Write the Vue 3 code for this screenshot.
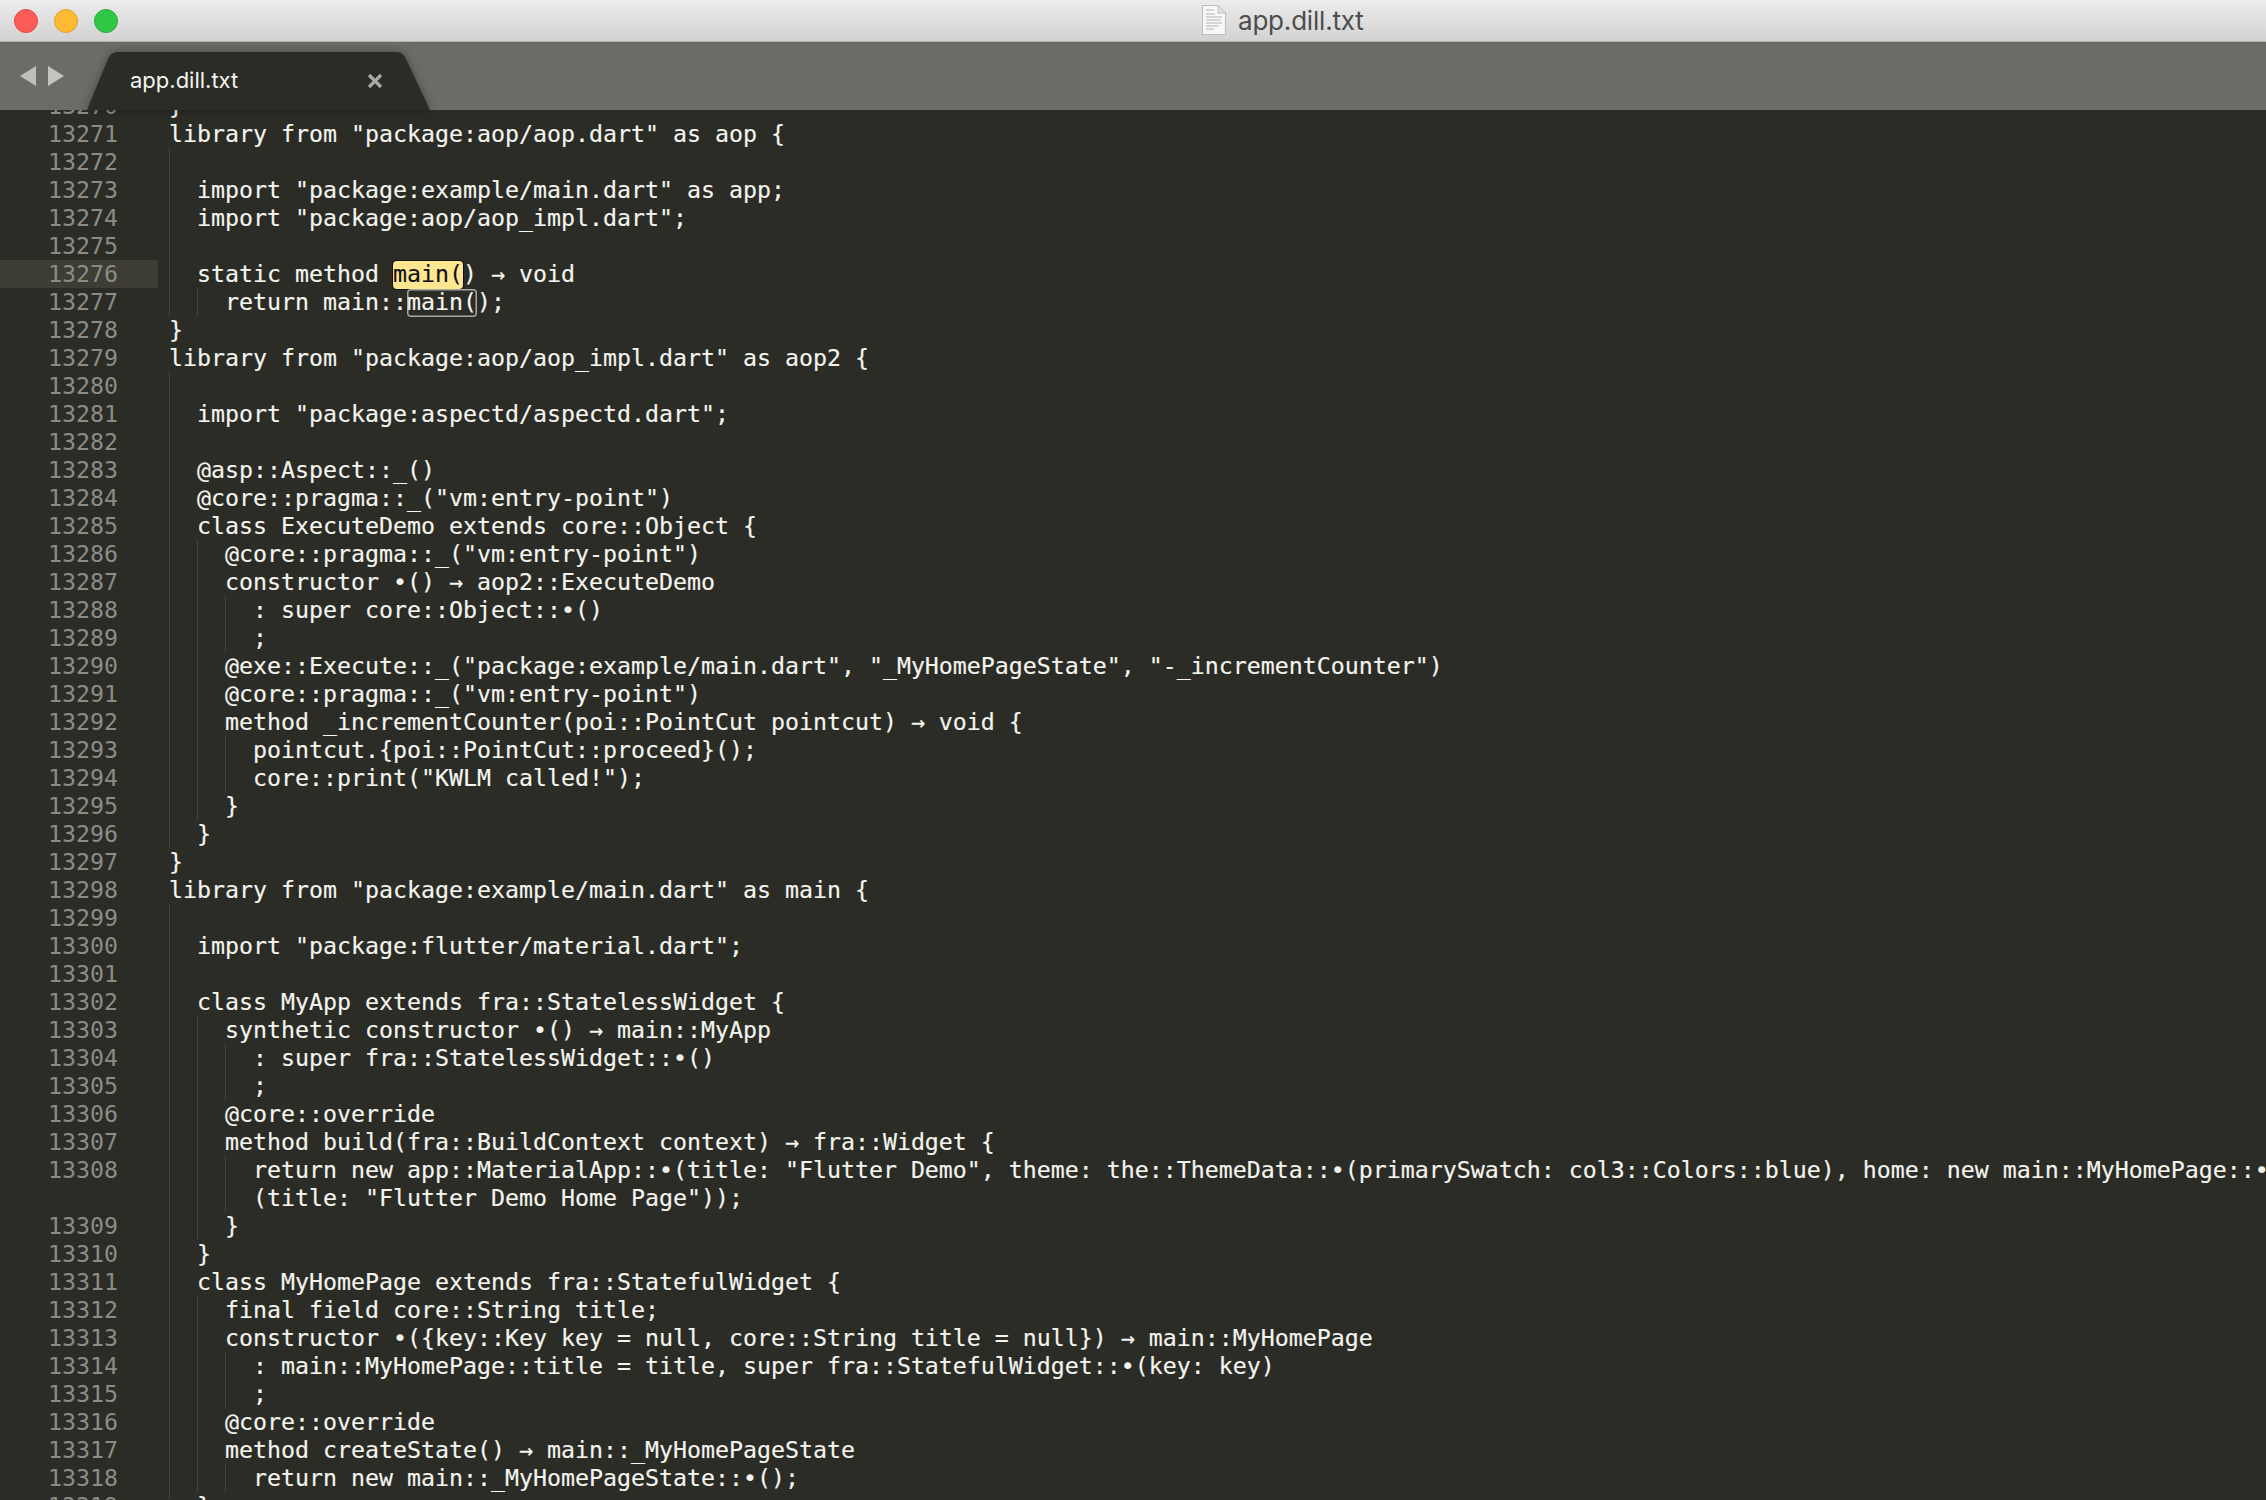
<script setup>
import { computed } from 'vue'

const source = [
  [13270, '}'],
  [13271, 'library from "package:aop/aop.dart" as aop {'],
  [13272, ''],
  [13273, '  import "package:example/main.dart" as app;'],
  [13274, '  import "package:aop/aop_impl.dart";'],
  [13275, ''],
  [13276, '  static method main() → void', 'find', 16],
  [13277, '    return main::main();', 'outline', 17],
  [13278, '}'],
  [13279, 'library from "package:aop/aop_impl.dart" as aop2 {'],
  [13280, ''],
  [13281, '  import "package:aspectd/aspectd.dart";'],
  [13282, ''],
  [13283, '  @asp::Aspect::_()'],
  [13284, '  @core::pragma::_("vm:entry-point")'],
  [13285, '  class ExecuteDemo extends core::Object {'],
  [13286, '    @core::pragma::_("vm:entry-point")'],
  [13287, '    constructor •() → aop2::ExecuteDemo'],
  [13288, '      : super core::Object::•()'],
  [13289, '      ;'],
  [13290, '    @exe::Execute::_("package:example/main.dart", "_MyHomePageState", "-_incrementCounter")'],
  [13291, '    @core::pragma::_("vm:entry-point")'],
  [13292, '    method _incrementCounter(poi::PointCut pointcut) → void {'],
  [13293, '      pointcut.{poi::PointCut::proceed}();'],
  [13294, '      core::print("KWLM called!");'],
  [13295, '    }'],
  [13296, '  }'],
  [13297, '}'],
  [13298, 'library from "package:example/main.dart" as main {'],
  [13299, ''],
  [13300, '  import "package:flutter/material.dart";'],
  [13301, ''],
  [13302, '  class MyApp extends fra::StatelessWidget {'],
  [13303, '    synthetic constructor •() → main::MyApp'],
  [13304, '      : super fra::StatelessWidget::•()'],
  [13305, '      ;'],
  [13306, '    @core::override'],
  [13307, '    method build(fra::BuildContext context) → fra::Widget {'],
  [13308, '      return new app::MaterialApp::•(title: "Flutter Demo", theme: the::ThemeData::•(primarySwatch: col3::Colors::blue), home: new main::MyHomePage::•'],
  ['', '      (title: "Flutter Demo Home Page"));'],
  [13309, '    }'],
  [13310, '  }'],
  [13311, '  class MyHomePage extends fra::StatefulWidget {'],
  [13312, '    final field core::String title;'],
  [13313, '    constructor •({key::Key key = null, core::String title = null}) → main::MyHomePage'],
  [13314, '      : main::MyHomePage::title = title, super fra::StatefulWidget::•(key: key)'],
  [13315, '      ;'],
  [13316, '    @core::override'],
  [13317, '    method createState() → main::_MyHomePageState'],
  [13318, '      return new main::_MyHomePageState::•();'],
  [13319, '  }']
]

const lines = computed(() =>
  source.map(([num, text, mark, at]) => {
    const spaces = text.length - text.trimStart().length
    const level = text === '' ? 1 : Math.floor(spaces / 2)
    const end = at + 5
    return {
      key: `${num}-${text.length}`,
      num,
      mark,
      current: num === 13276,
      guides: Array.from({ length: level }, (_, i) => i),
      before: mark ? text.slice(0, at) : text,
      marked: mark ? text.slice(at, end) : '',
      after: mark ? text.slice(end) : ''
    }
  })
)
</script>

<template>
  <div class="window">
    <header class="titlebar">
      <div class="lights">
        <span class="light red"></span>
        <span class="light yellow"></span>
        <span class="light green"></span>
      </div>
      <div class="title">
        <svg class="doc" width="24" height="30" viewBox="0 0 24 30">
          <path d="M.5.5H16L23.5 8V29.5H.5Z" fill="#f7f7f7" stroke="#bdbdbd" />
          <path d="M16 .5V8H23.5Z" fill="#e2e2e2" stroke="#bdbdbd" />
          <path d="M4 5H12M4 9H13M4 12H20M4 15H19M4 18H20M4 21H17M4 24H12" stroke="#b4b4b4" stroke-width="1" />
        </svg>
        <span>app.dill.txt</span>
      </div>
    </header>

    <div class="tabbar">
      <div class="arrows">
        <svg width="16" height="20" viewBox="0 0 16 20"><path d="M16 0V20L0 10Z" fill="#bdbdb9" /></svg>
        <svg width="16" height="20" viewBox="0 0 16 20"><path d="M0 0V20L16 10Z" fill="#c4c4c0" /></svg>
      </div>
      <div class="tab">
        <svg class="tab-shape" width="343" height="58" viewBox="0 0 343 58">
          <path d="M0 58 L21 7 Q24 0 31 0 H310 Q316 0 319 7 L343 58 Z" fill="#2b2c26" />
        </svg>
        <span class="tab-name">app.dill.txt</span>
        <svg class="tab-close" width="16" height="16" viewBox="0 0 16 16">
          <path d="M2 2L14 14M14 2L2 14" stroke="#a9a9a5" stroke-width="3.2" />
        </svg>
      </div>
    </div>

    <main class="editor">
      <div class="scroll">
        <div v-for="line in lines" :key="line.key" class="row">
          <div class="num" :class="{ current: line.current }">{{ line.num }}</div>
          <div class="code">
            <i v-for="g in line.guides" :key="g" class="guide" :style="{ left: g * 28 + 'px' }"></i>
            <span>{{ line.before }}</span><span v-if="line.mark" class="mark" :class="line.mark">{{ line.marked }}</span><span v-if="line.mark">{{ line.after }}</span>
          </div>
        </div>
      </div>
    </main>
  </div>
</template>

<style scoped>
.window {
  width: 2266px;
  height: 1500px;
  display: flex;
  flex-direction: column;
  overflow: hidden;
  background: #2b2c26;
}
.titlebar {
  height: 41px;
  flex: none;
  display: flex;
  align-items: center;
  position: relative;
  background: linear-gradient(#ececec, #d2d2d2);
  border-bottom: 1px solid #b2b2b0;
}
.lights {
  display: flex;
  gap: 16px;
  padding-left: 14px;
}
.light {
  width: 24px;
  height: 24px;
  border-radius: 50%;
  box-sizing: border-box;
}
.red { background: #fc5b57; border: 1px solid #e3463f; }
.yellow { background: #ffbb33; border: 1px solid #e1a02a; }
.green { background: #2fc845; border: 1px solid #27aa35; }
.title {
  position: absolute;
  left: 1202px;
  top: 5px;
  display: flex;
  align-items: center;
  gap: 12px;
  font: 26px "Inter", "Liberation Sans", sans-serif;
  letter-spacing: -0.2px;
  color: #4d4d4d;
}
.doc { flex: none; margin-top: -2px; }
.tabbar {
  height: 68px;
  flex: none;
  display: flex;
  align-items: flex-end;
  background: #6b6c66;
  position: relative;
  z-index: 1;
}
.arrows {
  display: flex;
  gap: 12px;
  padding: 0 0 24px 20px;
  width: 67px;
}
.tab {
  width: 343px;
  height: 58px;
  position: relative;
  display: flex;
  align-items: center;
}
.tab-shape {
  position: absolute;
  inset: 0;
  filter: drop-shadow(0 0 4px rgba(0, 0, 0, 0.35));
}
.tab-name {
  position: relative;
  margin: 0 0 2px 43px;
  font: 22px "Inter", "Liberation Sans", sans-serif;
  letter-spacing: 0;
  color: #f4f4f0;
}
.tab-close {
  position: absolute;
  left: 280px;
  top: 21px;
}
.editor {
  flex: 1;
  min-height: 0;
  overflow: hidden;
}
.scroll {
  margin-top: -18px;
  font: 23.25px/28px "DejaVu Sans Mono", "Liberation Mono", monospace;
  color: #f5f5f0;
  -webkit-text-stroke: 0.15px currentColor;
}
.row {
  display: flex;
  height: 28px;
}
.num {
  width: 118px;
  padding-right: 40px;
  flex: none;
  text-align: right;
  color: #8b8c85;
  -webkit-text-stroke: 0;
}
.num.current { background: #3d3d35; }
.code {
  position: relative;
  isolation: isolate;
  margin-left: 11px;
  flex: 1;
  min-width: 0;
  white-space: pre;
}
.guide {
  position: absolute;
  top: 0;
  bottom: 0;
  width: 1px;
  background: repeating-linear-gradient(#5c5d57 0 1px, transparent 1px 2px);
}
.mark {
  display: inline-block;
  height: 28px;
  vertical-align: top;
  position: relative;
}
.mark::before {
  content: "";
  position: absolute;
  inset: 1px 0 -1px;
  z-index: -1;
  border-radius: 4px;
}
.find { color: #111; }
.find::before {
  background: #ffe792;
  box-shadow: 0 0 0 1px #111;
}
.outline::before {
  box-shadow: inset 0 0 0 1.5px #a8a8a2;
}
</style>
